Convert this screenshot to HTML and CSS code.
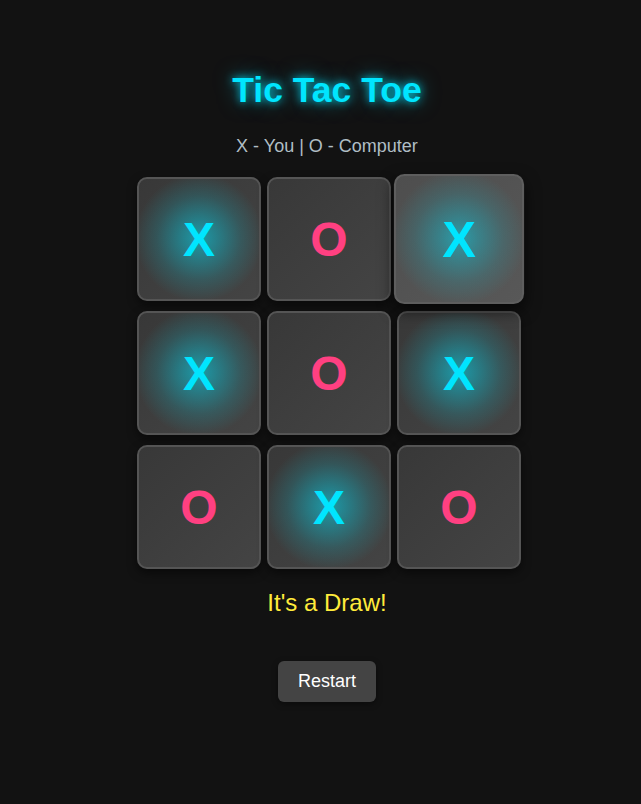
FILE: index.html
```html
<!DOCTYPE html>
<html lang="en">
<head>
<meta charset="utf-8">
<title>Tic Tac Toe</title>
<link rel="stylesheet" href="styles.css">
</head>
<body>
<main class="page">
  <h1 class="title">Tic Tac Toe</h1>
  <p class="legend">X - You | O - Computer</p>
  <div class="board">
    <div class="cell x">X</div>
    <div class="cell o">O</div>
    <div class="cell x lift">X</div>
    <div class="cell x">X</div>
    <div class="cell o">O</div>
    <div class="cell x">X</div>
    <div class="cell o">O</div>
    <div class="cell x">X</div>
    <div class="cell o">O</div>
  </div>
  <p class="status">It's a Draw!</p>
  <button class="restart">Restart</button>
</main>
</body>
</html>
```
FILE: styles.css
```css
html, body {
  margin: 0;
  padding: 0;
  background: #121212;
  height: 100%;
}
body {
  font-family: "Liberation Sans", Arial, sans-serif;
  color: #fff;
}
.page {
  padding-left: 13px;
  display: flex;
  flex-direction: column;
  align-items: center;
  text-align: center;
}
.title {
  margin: 70px 0 0;
  font-size: 35.5px;
  font-weight: bold;
  line-height: normal;
  color: #00e5ff;
  text-shadow: 0 0 8px rgba(0, 229, 255, 0.85), 0 0 20px rgba(0, 229, 255, 0.5);
}
.legend {
  margin: 25px 0 0;
  font-size: 18px;
  line-height: normal;
  color: #b0bec5;
}
.board {
  margin-top: 20px;
  display: grid;
  grid-template-columns: repeat(3, 120px);
  gap: 10px;
  justify-content: center;
}
.cell {
  width: 120px;
  height: 120px;
  border: 2px solid #555;
  border-radius: 10px;
  background: linear-gradient(135deg, #383838, #444);
  box-shadow: 0 4px 10px rgba(0, 0, 0, 0.5);
  display: flex;
  align-items: center;
  justify-content: center;
  font-size: 48px;
  font-weight: bold;
  line-height: normal;
}
.x {
  color: #00e5ff;
  background:
    radial-gradient(circle at 50% 49%, rgba(0, 229, 255, 0.55) 0, rgba(0, 229, 255, 0.38) 18px, rgba(0, 229, 255, 0.15) 42px, rgba(0, 229, 255, 0) 64px),
    linear-gradient(135deg, #383838, #444);
}
.o {
  color: #ff4081;
}
.lift {
  transform: scale(1.05);
  border-color: #5e5e5e;
  background:
    radial-gradient(circle at 50% 49%, rgba(0, 229, 255, 0.5) 0, rgba(0, 229, 255, 0.32) 18px, rgba(0, 229, 255, 0.12) 42px, rgba(0, 229, 255, 0) 64px),
    linear-gradient(135deg, #4e4e4e, #585858);
  box-shadow: 0 6px 14px rgba(0, 0, 0, 0.6);
}
.status {
  margin: 20px 0 0;
  font-size: 24px;
  line-height: normal;
  color: #ffeb3b;
}
.restart {
  margin-top: 44px;
  padding: 10px 20px;
  font-family: "Liberation Sans", Arial, sans-serif;
  font-size: 18px;
  line-height: normal;
  color: #fff;
  background: #444;
  border: none;
  border-radius: 6px;
  box-shadow: 0 2px 6px rgba(0, 0, 0, 0.4);
}
```
